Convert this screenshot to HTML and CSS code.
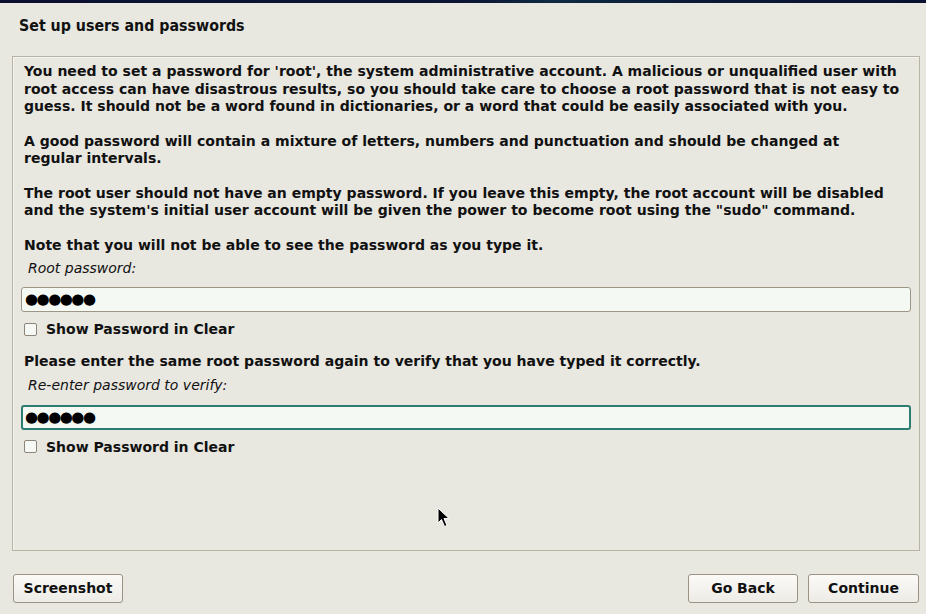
FILE: index.html
```html
<!DOCTYPE html>
<html>
<head>
<meta charset="utf-8">
<title>Set up users and passwords</title>
<link rel="stylesheet" href="styles.css">
</head>
<body>
<div class="topbar"></div>
<div class="header">Set up users and passwords</div>
<div class="frame">
  <div class="content">
    <p class="para">You need to set a password for 'root', the system administrative account. A malicious or unqualified user with root access can have disastrous results, so you should take care to choose a root password that is not easy to guess. It should not be a word found in dictionaries, or a word that could be easily associated with you.</p>
    <p class="para">A good password will contain a mixture of letters, numbers and punctuation and should be changed at regular intervals.</p>
    <p class="para">The root user should not have an empty password. If you leave this empty, the root account will be disabled and the system's initial user account will be given the power to become root using the "sudo" command.</p>
    <p class="para last">Note that you will not be able to see the password as you type it.</p>
    <div class="label">Root password:</div>
    <div class="entry">●●●●●●</div>
    <div class="check"><span class="box"></span><span>Show Password in Clear</span></div>
    <p class="para verify">Please enter the same root password again to verify that you have typed it correctly.</p>
    <div class="label label2">Re-enter password to verify:</div>
    <div class="entry focused">●●●●●●</div>
    <div class="check"><span class="box"></span><span>Show Password in Clear</span></div>
  </div>
</div>
<div class="buttons">
  <div class="btn">Screenshot</div>
  <div class="right">
    <div class="btn back">Go Back</div>
    <div class="btn cont">Continue</div>
  </div>
</div>
<svg class="cursor" width="14" height="22" viewBox="0 0 14 22"><path d="M1 1 L1 16 L4.5 12.5 L7.5 19.5 L10 18.5 L7 11.5 L12 11.5 Z" fill="#000" stroke="#fff" stroke-width="1"/></svg>
</body>
</html>
```
FILE: styles.css
```css
html, body {
  margin: 0;
  padding: 0;
}
body {
  width: 926px;
  height: 614px;
  background: #e8e7e0;
  font-family: "DejaVu Sans", "Liberation Sans", sans-serif;
  color: #111;
  position: relative;
  overflow: hidden;
}
.topbar {
  height: 3px;
  background: linear-gradient(90deg, #0b1030 0%, #0c1535 50%, #0e2a45 60%, #0b1a38 75%, #0a1030 100%);
}
.header {
  font-family: "DejaVu Sans", sans-serif;
  font-stretch: condensed;
  font-weight: bold;
  font-size: 15.8px;
  line-height: 18px;
  padding: 14px 0 0 19px;
  height: 53px;
  box-sizing: border-box;
}
.frame {
  margin: 0 6px 0 12px;
  height: 495px;
  box-sizing: border-box;
  border: 1px solid #b9b3a5;
  box-shadow: inset 1px 1px 0 #f4f3ee;
}
.content {
  padding: 6px 8px 0 8px;
}
.para {
  margin: 0 0 17px 0;
  padding: 0 11px 0 3px;
  font-weight: bold;
  font-size: 14.04px;
  line-height: 17.5px;
}
.para.last {
  margin-bottom: 6px;
}
.label {
  font-style: italic;
  font-size: 14px;
  line-height: 17px;
  padding-left: 7px;
  margin-bottom: 10px;
}
.label2 {
  margin-bottom: 11px;
}
.entry {
  height: 25px;
  box-sizing: border-box;
  border: 1px solid #9d9585;
  border-radius: 3px;
  background: #f5f9f4;
  font-size: 15px;
  line-height: 22px;
  padding-left: 3px;
  letter-spacing: -1.5px;
  color: #000;
}
.entry.focused {
  border: 2px solid #2e7d72;
  line-height: 20px;
  padding-left: 2px;
  height: 25px;
}
.check {
  display: flex;
  align-items: center;
  gap: 9px;
  margin-top: 9px;
  padding-left: 3px;
  font-weight: bold;
  font-size: 14px;
  line-height: 16px;
}
.box {
  width: 13px;
  height: 13px;
  box-sizing: border-box;
  border: 1px solid #8c8578;
  border-radius: 2px;
  background: #f5f8f4;
}
.para.verify {
  margin: 16px 0 6px 0;
}
.buttons {
  display: flex;
  justify-content: space-between;
  padding: 23px 7px 0 13px;
}
.right {
  display: flex;
  gap: 10px;
}
.btn {
  width: 110px;
  height: 29px;
  box-sizing: border-box;
  border: 1px solid #9b9382;
  border-radius: 3px;
  background: linear-gradient(#fbfaf7, #ecebe6);
  font-weight: bold;
  font-size: 14px;
  line-height: 27px;
  text-align: center;
}
.btn.cont {
  width: 111px;
}
.cursor {
  position: absolute;
  left: 437px;
  top: 507px;
}
```
